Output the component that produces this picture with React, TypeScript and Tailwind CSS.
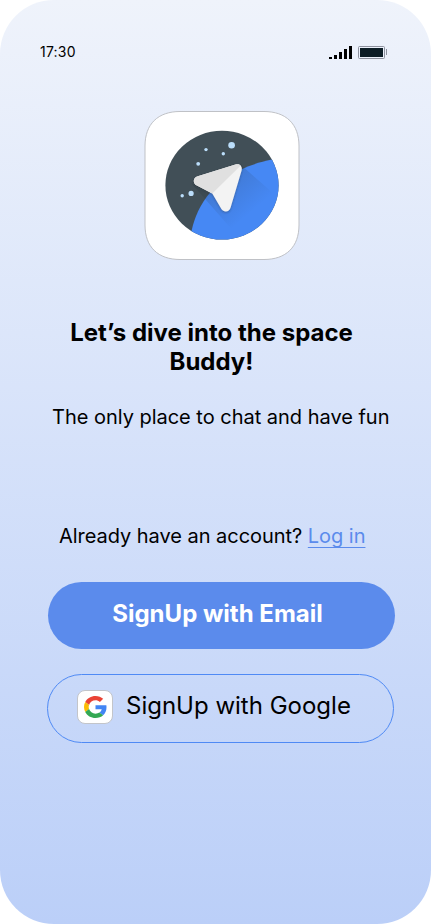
const stars: [number, number, number][] = [
  [231.6, 145.3, 3.3],
  [206, 149.6, 1.7],
  [223.3, 153.8, 1.7],
  [198.2, 163.8, 1.9],
  [191.1, 193.4, 2.6],
  [182.2, 195.8, 1.7],
];

function AppLogo() {
  return (
    <svg className="block" width="156" height="151" viewBox="144 110 156 151" role="img" aria-label="Space Buddy">
      <defs>
        <clipPath id="disc">
          <ellipse cx="222" cy="185.2" rx="56.6" ry="54.4" />
        </clipPath>
        <linearGradient id="trail" gradientUnits="userSpaceOnUse" x1="222" y1="172" x2="254" y2="210">
          <stop offset="0" stopColor="#263238" stopOpacity="0.2" />
          <stop offset="1" stopColor="#263238" stopOpacity="0" />
        </linearGradient>
        <filter id="lift" x="-20%" y="-20%" width="140%" height="150%">
          <feDropShadow dx="0" dy="1" stdDeviation="1.2" floodColor="#263238" floodOpacity="0.4" />
        </filter>
      </defs>
      <path
        d="M180 111.5H264C286 111.5 299 124 299 146V225C299 247 286 259.5 264 259.5H180C158 259.5 145 247 145 225V146C145 124 158 111.5 180 111.5Z"
        fill="#fff"
        stroke="#bfc1c6"
        strokeWidth="1"
      />
      <g clipPath="url(#disc)">
        <rect x="164" y="129" width="116" height="112" fill="#414f57" />
        <path d="M191.5 231C198 201 219 170 272 159.6L290 158V250H191Z" fill="#4688f4" />
        <path d="M191 183L213 193L241 165L290 208V250H250Z" fill="url(#trail)" />
        {stars.map(([x, y, r]) => (
          <circle key={`${x}-${y}`} cx={x} cy={y} r={r} fill="#bbdefb" />
        ))}
      </g>
      <g filter="url(#lift)">
        <path
          d="M197 176.4L235.5 164.6C239.5 163.4 242.8 166.3 241.6 170.5L230.6 207.4C229.3 212.4 223.8 212.7 221.4 209L212.3 193.4L197 185.6C192.6 183.2 193 178 197 176.4Z"
          fill="#f3f3f3"
        />
        <path
          d="M197 176.4L235.5 164.6C237.7 163.9 239.5 164.4 240.7 165.6L212.3 193.4L197 185.6C192.6 183.2 193 178 197 176.4Z"
          fill="#e0e0e0"
        />
      </g>
    </svg>
  );
}

function GoogleIcon() {
  return (
    <svg className="block" width="23" height="22" viewBox="0 0 48 48" preserveAspectRatio="none" aria-hidden="true">
      <path fill="#EA4335" d="M24 9.5c3.54 0 6.71 1.22 9.21 3.6l6.85-6.85C35.9 2.38 30.47 0 24 0 14.62 0 6.51 5.38 2.56 13.22l7.98 6.19C12.43 13.72 17.74 9.5 24 9.5z" />
      <path fill="#4285F4" d="M46.98 24.55c0-1.57-.15-3.09-.38-4.55H24v9.02h12.94c-.58 2.96-2.26 5.48-4.78 7.18l7.73 6c4.51-4.18 7.09-10.36 7.09-17.65z" />
      <path fill="#FBBC05" d="M10.53 28.59c-.48-1.45-.76-2.99-.76-4.59s.27-3.14.76-4.59l-7.98-6.19C.92 16.46 0 20.12 0 24c0 3.88.92 7.54 2.56 10.78l7.97-6.19z" />
      <path fill="#34A853" d="M24 48c6.48 0 11.93-2.13 15.89-5.81l-7.73-6c-2.15 1.45-4.92 2.3-8.16 2.3-6.26 0-11.57-4.22-13.47-9.91l-7.98 6.19C6.51 42.62 14.62 48 24 48z" />
    </svg>
  );
}

function StatusBar() {
  return (
    <header className="flex h-3.5 items-center justify-between pl-10 pr-[43px]">
      <time className="text-[14px] leading-[14px] tracking-[0.015em]">17:30</time>
      <div className="flex items-center gap-1.5">
        <svg className="block" width="23" height="13" viewBox="0 0 23 13" shapeRendering="crispEdges" aria-hidden="true">
          <path d="M0 11h3v2H0zM5 9h3v4H5zM10 6h3v7h-3zM15 3h3v10h-3zM20 0h3v13h-3z" />
        </svg>
        <svg className="block" width="30" height="13" viewBox="0 0 30 13" aria-hidden="true">
          <rect x="0.5" y="0.5" width="26" height="12" rx="1" fill="none" stroke="#8e929f" />
          <rect x="2" y="2" width="23" height="9" fill="#0d1d26" />
          <path d="M28 3h1v6h-1z" fill="#8e929f" />
        </svg>
      </div>
    </header>
  );
}

export default function App() {
  return (
    <div className="bg-white font-['Inter',sans-serif] text-black">
      <main className="flex h-[924px] w-[431px] flex-col overflow-hidden rounded-[54px] bg-linear-to-b from-[#eff3fb] to-[#bbcff8] pt-[45px]">
        <StatusBar />
        <div className="mt-[51px] pl-36">
          <AppLogo />
        </div>
        <h1 className="ml-[47px] mt-[57px] w-[329px] text-center text-2xl font-bold leading-[29px]">
          Let’s dive into the space Buddy!
        </h1>
        <p className="ml-[52px] mt-[29px] whitespace-nowrap text-xl leading-6 tracking-[-0.02px]">
          The only place to chat and have fun
        </p>
        <p className="ml-[59px] mt-[95px] whitespace-nowrap text-xl leading-6 tracking-[-0.04px]">
          Already have an account?{" "}
          <a href="#login" className="text-[#5b8bec] underline decoration-1 underline-offset-4">Log in</a>
        </p>
        <button className="ml-12 mt-[34px] h-[67px] w-[347px] shrink-0 rounded-full bg-[#5b8bec] pb-1 pr-2 text-2xl font-bold leading-[29px] text-white">
          SignUp with Email
        </button>
        <button className="ml-[47px] mt-[25px] flex h-[69px] w-[347px] shrink-0 items-center rounded-full border border-[#4f8af5] pl-[29px]">
          <span className="mb-[3px] flex h-[34px] w-9 items-center justify-center rounded-lg border border-[#c3c5ca] bg-white">
            <GoogleIcon />
          </span>
          <span className="ml-[13px] pb-1.5 text-2xl leading-[29px]">SignUp with Google</span>
        </button>
      </main>
    </div>
  );
}
